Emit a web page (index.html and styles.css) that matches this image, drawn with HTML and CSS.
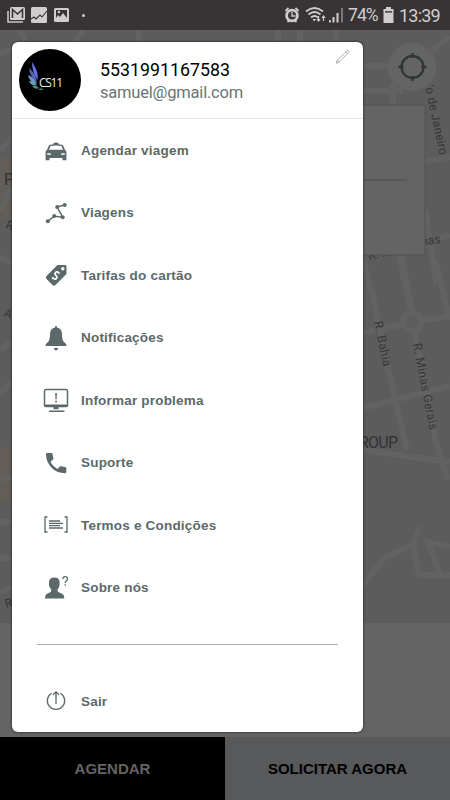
FILE: index.html
```html
<!DOCTYPE html>
<html lang="pt-BR">
<head>
    <meta charset="UTF-8">
    <meta name="viewport" content="width=device-width, initial-scale=1.0">
    <title>CS11</title>
    <link rel="stylesheet" href="styles.css">
</head>
<body>
    <div class="screen">
        <header class="status-bar">
            <div class="status-left">
                <svg width="80" height="30" viewBox="0 0 80 30">
                    <path d="M8 11v11h15" fill="none" stroke="#c8c5c6" stroke-width="1.6"/>
                    <rect x="10" y="7" width="15" height="13" rx="1.5" fill="#d0cdce"/>
                    <path d="M12.5 18V9.5l5 4.5 5-4.5V18" fill="none" stroke="#383435" stroke-width="1.6"/>
                    <rect x="31" y="7" width="16" height="16" rx="1.5" fill="#d0cdce"/>
                    <path d="M31 19l3-2 2 2 4-4 2 2 5-6" fill="none" stroke="#383435" stroke-width="1.1"/>
                    <rect x="54" y="8" width="15" height="14" rx="1.5" fill="#d0cdce"/>
                    <path d="M56 10h11v8l-4-5-3 4-2-2-2 3z" fill="#383435"/>
                    <circle cx="59" cy="12" r="1.3" fill="#d0cdce"/>
                </svg>
                <span class="dot"></span>
            </div>
            <div class="status-right">
                <svg width="62" height="30" viewBox="284 0 62 30">
                    <circle cx="292" cy="15.5" r="5.4" fill="none" stroke="#d0cdce" stroke-width="2.8"/>
                    <path d="M285.5 11l3-3M298.5 11l-3-3M287.5 22l2-2M296.5 22l-2-2" stroke="#d0cdce" stroke-width="1.8"/>
                    <path d="M292 12v4h3.5" fill="none" stroke="#d0cdce" stroke-width="1.3"/>
                    <g fill="none" stroke="#d0cdce" stroke-width="1.7">
                        <path d="M306 11.5q8.500-7 17 0M308.500 14.500q6-5 12 0M311 17.500q3.500-3 7 0"/>
                        <path d="M318.500 16v5M323.500 21v-5" stroke-width="1.2"/>
                    </g>
                    <path d="M312.500 19h3.500l-1.700 2.500zM316.300 19h4.400l-2.200 3zM321.300 18h4.400l-2.200-3z" fill="#d0cdce"/>
                    <path d="M329 20h1.800v2.500H329zM332.500 17h2v5.500h-2zM336.500 13h2v9.500h-2z" fill="#d0cdce"/>
                    <path d="M341 8h2v14.500h-2z" fill="#7b7778"/>
                </svg>
                <span class="battery-level">74%</span>
                <svg width="11" height="30" viewBox="383 0 11 30">
                    <path d="M386 7h5v2h2.500v14h-10V9h2.500z" fill="#d0cdce"/>
                    <path d="M385 11h7v1.700h-7z" fill="#555152"/>
                </svg>
                <span class="clock">13:39</span>
            </div>
        </header>

        <main class="content">
            <svg class="map" width="450" height="593" viewBox="0 30 450 593">
                <path d="M0 158h12v62H0zM0 447h12v55H0z" fill="#625d57"/>
                <g class="roads">
                    <path d="M20 30l8 15M72 45l12-15M139 30v15M278 30v12M300 30v12M336 30v12"/>
                    <path d="M363 91h40M393 106v-20l20-20 37-30M363 66h25"/>
                    <path d="M422 162l28-5M425 210l12 75M398 252l13 60M450 235l-25 10"/>
                    <path d="M363 260l11 40 8 40 15 68 10 42"/>
                    <path d="M363 333l38-8 11-3M412 322l38-6M401 252l11 60M412 322l9 40 15 80 12 38"/>
                    <path d="M363 408l87-22M435 260l15 60M363 450l87 12"/>
                    <path d="M363 585l22-28 28-12 6-18M413 543l6 32h31M450 547l-22-5 12 32"/>
                    <path d="M0 53l12-3M0 150l12-12M0 210l12-22M0 257l12 5M0 350l12-8M0 395l12-14M0 478h12M0 522h12M0 558h12M0 592l12-5"/>
                </g>
                <circle cx="412" cy="322" r="9" fill="#5c5c5c" stroke="#626262" stroke-width="6"/>
                <g class="street-names">
                    <text transform="translate(425 86) rotate(78)" textLength="71">'o de Janeiro</text>
                    <text transform="translate(374 322) rotate(78)" textLength="46">R. Bahia</text>
                    <text transform="translate(413 344) rotate(79)" textLength="88">R. Minas Gerais</text>
                    <text transform="translate(422 246) rotate(-10)">nas</text>
                    <text transform="translate(369 260) rotate(-12)">R. Mi</text>
                    <text transform="translate(5 228) rotate(20)">R.</text>
                    <text transform="translate(3 316) rotate(20)">A</text>
                    <text transform="translate(6 608) rotate(-15)">R.</text>
                </g>
                <g class="place-names">
                    <text x="4" y="185">P</text>
                    <text x="359" y="448" textLength="39">ROUP</text>
                </g>
                <path d="M340 105h83a2 2 0 0 1 2 2v146a2 2 0 0 1-2 2h-83z" class="address-card"/>
                <path d="M340 180h67" stroke="#4d4d4d"/>
                <circle cx="412" cy="67" r="24" fill="#646464"/>
                <g fill="none" stroke="#303636" stroke-width="2.3">
                    <circle cx="412.5" cy="67" r="11"/>
                    <path d="M412.500 53v5M412.500 76v5M398.500 67h5M421.500 67h5"/>
                </g>
            </svg>
        </main>

        <footer class="actions">
            <button class="action action-schedule">AGENDAR</button>
            <button class="action action-request">SOLICITAR AGORA</button>
        </footer>

        <nav class="menu">
            <div class="profile">
                <svg class="avatar" width="62" height="62" viewBox="19 49 62 62">
                    <circle cx="50" cy="80" r="31" fill="#000"/>
                    <path d="M32 62q6 8 6 18-6-7-6-18z" fill="#6c73e6"/>
                    <path d="M29 68q7 6 8 14-7-5-8-14z" fill="#5966bd"/>
                    <path d="M28 75q6 2 9 9-8-2-9-9z" fill="#6f94c7"/>
                    <path d="M29 81q5 0 8 4.500-6 .5-8-4.500z" fill="#64a9b6"/>
                    <path d="M32 86q4-1 7 2-4 2-7-2zM38 89q3-1 6 0-3 2-6 0z" fill="#4e9593"/>
                    <text x="39" y="87" class="logo-text" textLength="24">CS11</text>
                </svg>
                <div class="profile-info">
                    <div class="profile-phone">5531991167583</div>
                    <div class="profile-email">samuel@gmail.com</div>
                </div>
                <svg class="edit" width="16" height="16" viewBox="0 0 16 16">
                    <path d="M1.200 14.300l1-3L12.400 1.600q.8-.6 1.500.1t0 1.500L4 13.300zM2.200 11.300l1.800 2M11 3l1.800 1.800" fill="none" stroke="#999" stroke-width=".8"/>
                </svg>
            </div>

            <ul class="menu-list">
                <li class="menu-item">
                    <svg class="icon" viewBox="0 0 28 28">
                        <path d="M11.500 7Q14 6 16.500 7v1.200q4 .2 4.600 1.300l2 4.500q1.300.8 1.300 2.300v8h-3.900v-2.200h-13v2.200H3.600v-8q0-1.500 1.300-2.300l2-4.500q.6-1.100 4.600-1.300z"/>
                        <path class="cut" d="M8.500 10.100q5.500-1 11 0l1.500 3.700H7zM5.300 17l3.500.5v1.200H5.300zM22.700 17l-3.500.5v1.200h3.500z"/>
                    </svg>
                    <a href="#">Agendar viagem</a>
                </li>
                <li class="menu-item">
                    <svg class="icon" viewBox="0 0 28 28">
                        <path class="line" d="M6 22l6.300-4.800 8.400 1L15 8l7.700-2"/>
                        <circle cx="5.800" cy="22.200" r="2"/><circle cx="12.200" cy="17" r="2"/><circle cx="20.700" cy="18.200" r="2"/><circle cx="15.200" cy="8" r="2"/><circle cx="22.700" cy="6" r="2"/>
                    </svg>
                    <a href="#">Viagens</a>
                </li>
                <li class="menu-item">
                    <svg class="icon" viewBox="0 0 28 28">
                        <path d="M15.500 4H23q1.500 0 1.500 1.500V13L13.500 24q-1.500 1.500-3 0l-6-6q-1.500-1.500 0-3z"/>
                        <circle class="cut" cx="20.800" cy="7.800" r="1.700"/>
                        <path d="M17 12q-2-2-3.500-.5-1.200 1.300.5 3t.4 3Q13 19 11 16.800M17.500 11.300l-1.300 1.300M11.600 16.300l-1.500 1.500" fill="none" stroke="#fff" stroke-width="1.7"/>
                    </svg>
                    <a href="#">Tarifas do cartão</a>
                </li>
                <li class="menu-item">
                    <svg class="icon" viewBox="0 0 28 28">
                        <path d="M13.200 2h1.600v1.600q5 1 5.200 6.400.1 5.500 1.500 7.500 3 2.200 3 4.500h-21q0-2.300 3-4.500Q7.900 15.500 8 10q.2-5.400 5.200-6.400zM11.800 24h4.400q-.2 2.400-2.200 2.400T11.800 24z"/>
                    </svg>
                    <a href="#">Notificações</a>
                </li>
                <li class="menu-item">
                    <svg class="icon" viewBox="0 0 28 28">
                        <rect class="line" x="2.500" y="3.500" width="23" height="17" rx="1.500"/>
                        <path d="M2.500 18.500h23v2h-23zM11.500 21h5v2.300h-5zM7 24.500h15.500V26H7zM13.200 7h1.700l-.3 6.500h-1.100zM13.200 14.700h1.700v1.700h-1.700z"/>
                    </svg>
                    <a href="#">Informar problema</a>
                </li>
                <li class="menu-item">
                    <svg class="icon" viewBox="0 0 28 28">
                        <path d="M5 4h4.500q1 0 1.100 1 .1 2.400.8 4 .3.700-.2 1.200L8.500 12.900q2.500 4.700 7 7.100l2.500-2.500q.6-.6 1.300-.3 1.700.7 3.900.8 1.100.1 1.100 1.100v4q0 1.100-1.100 1.100Q14.500 24 9.300 18.400 4 12.800 4 5q0-1 1-1z"/>
                    </svg>
                    <a href="#">Suporte</a>
                </li>
                <li class="menu-item">
                    <svg class="icon" viewBox="0 0 28 28">
                        <path class="line thin" d="M5.500 6H3v15h2.500M22.500 6H25v15h-2.500M7 10h11M7 12.300h14M7 14.600h11M7 17h14"/>
                    </svg>
                    <a href="#">Termos e Condições</a>
                </li>
                <li class="menu-item">
                    <svg class="icon" viewBox="0 0 28 28">
                        <path d="M7 8.500Q7 3.500 12.300 3.500t5.300 5v2q0 3-2 5v1.800q.5 1 3.400 2 3.300 1 3.300 5.200H3q0-4.200 3-5.200 3-1 3.200-2v-1.800Q7 13.500 7 10.500z"/>
                        <path class="line thin" d="M20.800 5q.2-2.300 2.400-2.300t2.400 2c0 2-2.400 2-2.400 4.300M23.200 10.300v1.500"/>
                    </svg>
                    <a href="#">Sobre nós</a>
                </li>
            </ul>

            <hr class="separator">

            <div class="menu-item">
                <svg class="icon" viewBox="0 0 28 28">
                    <path class="line thin" d="M9.500 6.300a8.700 8.700 0 1 0 9 0M14 17V5M11 7.800l3-3 3 3"/>
                </svg>
                <a href="#">Sair</a>
            </div>
        </nav>
    </div>
</body>
</html>
```
FILE: styles.css
```css
:root {
    --gray-icon: #5b696b;
    --map-bg: #5c5c5c;
    --map-road: #626262;
    --overlay-bg: #646464;
}

* {
    margin: 0;
    padding: 0;
    box-sizing: border-box;
}

body {
    font-family: "Liberation Sans", Arial, sans-serif;
}

.screen {
    position: relative;
    display: flex;
    flex-direction: column;
    width: 450px;
    height: 800px;
    overflow: hidden;
    background: var(--overlay-bg);
}

.status-bar {
    display: flex;
    justify-content: space-between;
    height: 30px;
    background: #383435;
    color: #d0cdce;
    font-family: Roboto, sans-serif;
    font-size: 18px;
}

.status-left,
.status-right {
    display: flex;
    align-items: center;
}

.status-right {
    padding-right: 10px;
}

.dot {
    width: 3px;
    height: 3px;
    margin-left: 2px;
    border-radius: 50%;
    background: #d0cdce;
}

.battery-level {
    width: 34px;
    margin-right: 1px;
    margin-left: 2px;
    font-size: 17.5px;
    letter-spacing: -0.9px;
}

.clock {
    width: 41px;
    margin-left: 5px;
    letter-spacing: -0.8px;
}

.content {
    flex: 1;
}

.map {
    display: block;
    background: var(--map-bg);
}

.roads path {
    fill: none;
    stroke: var(--map-road);
    stroke-width: 6;
}

.street-names {
    fill: #363636;
    font-family: Roboto, sans-serif;
    font-size: 12px;
}

.place-names {
    fill: #2e3235;
    font-family: Roboto, sans-serif;
    font-size: 16px;
}

.address-card {
    fill: var(--overlay-bg);
    stroke: #535353;
}

.actions {
    display: flex;
    height: 63px;
}

.action {
    flex: 1;
    border: 0;
    font-family: inherit;
    font-size: 15px;
    font-weight: bold;
}

.action-schedule {
    background: #000;
    color: #646464;
}

.action-request {
    background: #58595b;
    color: #000;
}

.menu {
    position: absolute;
    top: 42px;
    left: 12px;
    width: 351px;
    height: 690px;
    border-radius: 6px;
    background: #fff;
    box-shadow: 0 0 3px rgba(0, 0, 0, 0.7);
}

.profile {
    display: flex;
    height: 77px;
    padding: 7px 12px 0 7px;
    border-bottom: 1px solid #e8e8e8;
    font-family: Roboto, sans-serif;
}

.logo-text {
    fill: #eee;
    font-family: "Open Sans", sans-serif;
    font-size: 12px;
}

.profile-info {
    flex: 1;
    padding: 9px 0 0 19px;
}

.profile-phone {
    color: #000;
    font-size: 17.8px;
    line-height: 23px;
}

.profile-email {
    color: #687476;
    font-size: 16.5px;
    line-height: 24px;
    letter-spacing: -0.2px;
}

.menu-list {
    list-style: none;
}

.menu-item {
    display: flex;
    align-items: center;
    height: 62.5px;
    padding-left: 30px;
}

.menu-item a {
    margin-left: 11px;
    color: var(--gray-icon);
    font-size: 13.5px;
    font-weight: bold;
    letter-spacing: 0.2px;
    text-decoration: none;
}

.icon {
    width: 28px;
    height: 28px;
    fill: var(--gray-icon);
}

.icon .cut {
    fill: #fff;
}

.icon .line {
    fill: none;
    stroke: var(--gray-icon);
    stroke-width: 1.5;
}

.icon .thin {
    stroke-width: 1.3;
}

.separator {
    margin: 25px;
    border: 0;
    border-top: 1px solid #a9b0b1;
}
```
